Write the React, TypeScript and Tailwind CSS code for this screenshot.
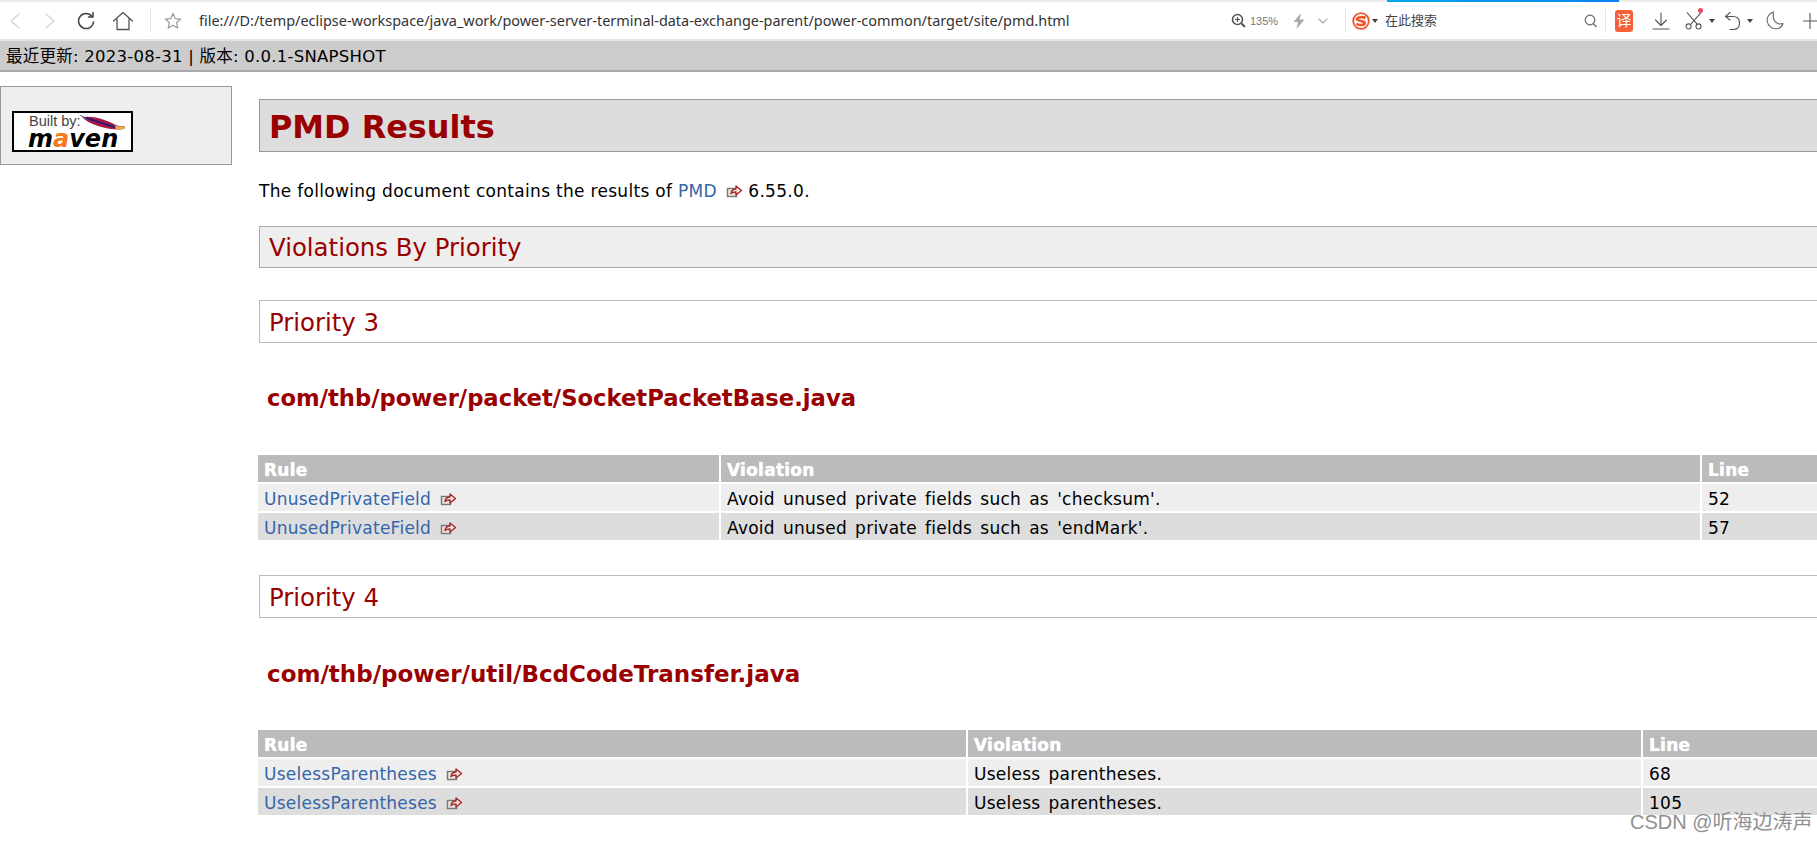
import React from "react";

const ExtIcon = () => (
  <svg width="17" height="14" viewBox="0 0 17 14" className="inline-block align-[-1px] ml-[3px]">
    <rect x="1.5" y="4.5" width="9" height="8" fill="#e8e4e0" stroke="#777" strokeWidth="1.4" />
    <path d="M5 9.5 C5.5 6.5 7.5 5 10 5 L10 2 L15.5 6.5 L10 11 L10 8 C8 8 6.5 8.3 5 9.5 Z" fill="#f4e4e0" stroke="#a52a2a" strokeWidth="1.4" strokeLinejoin="round" />
  </svg>
);

const stroke = { fill: "none", strokeLinecap: "round" as const, strokeLinejoin: "round" as const };

const Back = () => <svg width="12" height="18" viewBox="0 0 12 18"><path d="M10 2 L2 9 L10 16" stroke="#d4d4d4" strokeWidth="1.4" {...stroke} /></svg>;
const Fwd = () => <svg width="12" height="18" viewBox="0 0 12 18"><path d="M2 2 L10 9 L2 16" stroke="#d4d4d4" strokeWidth="1.4" {...stroke} /></svg>;
const Reload = () => <svg width="20" height="20" viewBox="0 0 20 20"><path d="M16 5.5 A7.5 7.5 0 1 0 17.5 11" stroke="#444" strokeWidth="1.5" {...stroke} /><path d="M12.5 6 L17 6 L17 1.5" stroke="#444" strokeWidth="1.5" {...stroke} /></svg>;
const Home = () => <svg width="22" height="20" viewBox="0 0 22 20"><path d="M1.5 10 L11 1.5 L20.5 10 M5 8 V18.5 H17 V8" stroke="#555" strokeWidth="1.3" {...stroke} /></svg>;
const Star = () => <svg width="18" height="18" viewBox="0 0 18 18"><path d="M9 1.5 L11.2 6.6 L16.7 7.1 L12.5 10.7 L13.8 16.1 L9 13.2 L4.2 16.1 L5.5 10.7 L1.3 7.1 L6.8 6.6 Z" stroke="#9a9a9a" strokeWidth="1.2" {...stroke} /></svg>;
const Zoom = () => <svg width="15" height="15" viewBox="0 0 15 15"><circle cx="6.5" cy="6.5" r="5" stroke="#555" strokeWidth="1.6" fill="none" /><path d="M10.5 10.5 L14 14" stroke="#555" strokeWidth="2" /><path d="M4 6.5 H9 M6.5 4 V9" stroke="#555" strokeWidth="1.2" /></svg>;
const Bolt = () => <svg width="12" height="16" viewBox="0 0 12 16"><path d="M8 0 L0.5 9 H5 L3.5 16 L11.5 6.5 H6.5 Z" fill="#a8a8a8" /></svg>;
const Chev = () => <svg width="10" height="6" viewBox="0 0 10 6"><path d="M1 1 L5 5 L9 1" stroke="#aaa" strokeWidth="1.1" {...stroke} /></svg>;
const Caret = () => <svg width="6" height="4" viewBox="0 0 6 4"><path d="M0 0 H6 L3 4 Z" fill="#444" /></svg>;
const Sogou = () => (
  <svg width="18" height="18" viewBox="0 0 18 18">
    <circle cx="9" cy="9" r="7.8" fill="#fff" stroke="#f0562c" strokeWidth="1.8" />
    <path d="M13.5 6.2 C12 4.8 5.5 4.6 5 7 C4.6 9.6 13 8.2 12.8 11 C12.5 13.5 6.5 13.4 4.3 11.8" fill="none" stroke="#f0562c" strokeWidth="2.6" />
  </svg>
);
const Search = () => <svg width="13" height="14" viewBox="0 0 13 14"><circle cx="6" cy="6" r="4.8" stroke="#666" strokeWidth="1.2" fill="none" /><path d="M9.5 9.8 L12.5 13" stroke="#666" strokeWidth="1.2" /></svg>;
const Download = () => <svg width="18" height="18" viewBox="0 0 18 18"><path d="M9 1 V13 M3.5 8 L9 13.5 L14.5 8 M1 17 H17" stroke="#555" strokeWidth="1.1" {...stroke} /></svg>;
const Scissors = () => <svg width="18" height="20" viewBox="0 0 20 20"><path d="M2.5 1 L14 14 M17.5 1 L6 14" stroke="#555" strokeWidth="1.2" {...stroke} /><circle cx="4" cy="16" r="2.8" stroke="#555" strokeWidth="1.2" fill="none" /><circle cx="15" cy="16" r="2.8" stroke="#555" strokeWidth="1.2" fill="none" /></svg>;
const Undo = () => <svg width="17" height="20" viewBox="0 0 17 20"><path d="M6 1.5 L1.5 5.5 L6 9 M1.5 5.5 H9 C13 5.5 15.5 8 15.5 12 C15.5 16 13 18.5 9 18.5 H6" stroke="#555" strokeWidth="1.2" {...stroke} /></svg>;
const Moon = () => <svg width="18" height="19" viewBox="0 0 18 19"><path d="M7.5 1 C2.5 2.5 0.7 7 1.2 10.5 C2 15 6 18 10 17.8 C13.5 17.6 16 15.5 17 12.5 C13 13.8 9 12 7.8 8.5 C7 6 7 3.5 7.5 1 Z" stroke="#666" strokeWidth="1.1" {...stroke} /></svg>;
const Plus = () => <svg width="14" height="16" viewBox="0 0 14 16"><path d="M7 0 V16 M0 8 H14" stroke="#555" strokeWidth="1.1" /></svg>;

const MavenLogo = () => (
  <div className="relative w-[121px] h-[41px] border-2 border-black bg-white mt-[24px] ml-[11px]">
    <span className="absolute left-[15px] top-[1px] text-[14.5px] leading-[15px] text-[#444] [font-family:'Liberation_Sans',sans-serif]">Built by:</span>
    <svg className="absolute left-[62px] top-[2px]" width="55" height="16" viewBox="0 0 50 17">
      <path d="M2 1 L6 2 C14 1 28 5 37 10 C41 12 45 12 48 12 L47 15 C40 16 32 15 24 13 C16 11 9 8 4 4 Z" fill="#a8174a" />
      <path d="M6 3 C16 6 28 11 40 13.5" stroke="#2d1a6b" strokeWidth="2" fill="none" />
      <path d="M37 11 C41 12.5 45 12.5 48 12 L47 15 C44 15.5 41 15.5 38 15 Z" fill="#e0b048" />
      <path d="M0 0 L8 5" stroke="#5a6a80" strokeWidth="1" />
    </svg>
    <span className="absolute left-[14px] top-[15px] text-[24px] leading-[22px] font-bold italic text-black [font-family:'DejaVu_Sans',sans-serif]">
      m<span className="text-[#f07a1c]">a</span>ven
    </span>
  </div>
);

type Row = { rule: string; text: string; line: string };

const ViolationTable = ({ c1, c2, rows }: { c1: string; c2: string; rows: Row[] }) => {
  const th = "bg-[#bbbbbb] text-white font-bold text-left px-[6px] pt-[2px] pb-0 h-[27px] [text-shadow:0_0_1px_#fff]";
  const td = "px-[6px] pt-[2px] pb-0 h-[27px]";
  return (
    <table className="border-separate border-spacing-[2px] -ml-[3px] w-[1640px] table-fixed text-[17px] tracking-[0.25px]">
      <colgroup>
        <col className={c1} />
        <col className={c2} />
        <col />
      </colgroup>
      <thead>
        <tr>
          <th className={th}>Rule</th>
          <th className={th}>Violation</th>
          <th className={th}>Line</th>
        </tr>
      </thead>
      <tbody>
        {rows.map((r, i) => (
          <tr key={i} className={i % 2 === 0 ? "bg-[#eeeeee]" : "bg-[#dddddd]"}>
            <td className={td}>
              <span className="text-[#3366aa]">{r.rule}</span> <ExtIcon />
            </td>
            <td className={`${td} [word-spacing:2.5px]`}>{r.text}</td>
            <td className={td}>{r.line}</td>
          </tr>
        ))}
      </tbody>
    </table>
  );
};

export default function App() {
  return (
    <div className="relative w-[1817px] h-[841px] overflow-hidden bg-white text-black text-[16px] leading-[20px] [font-family:'DejaVu_Sans','Noto_Sans_CJK_SC',sans-serif]">
      {/* tab strip */}
      <div className="relative h-[2px] bg-[#ececec]">
        <div className="absolute left-[1387px] top-0 w-[232px] h-[2px] bg-gradient-to-r from-[#0aa5f0] to-[#0a84f0]" />
      </div>
      {/* toolbar */}
      <div className="h-[37px] flex items-center text-[#222] border-b-[2px] border-[#e4e4e4] box-content [font-family:'Liberation_Sans','Noto_Sans_CJK_SC',sans-serif]">
        <div className="ml-[9px] flex"><Back /></div>
        <div className="ml-[23px] flex"><Fwd /></div>
        <div className="ml-[20px] flex"><Reload /></div>
        <div className="ml-[16px] flex"><Home /></div>
        <div className="ml-[16px] w-px h-[24px] bg-[#e6e6e6]" />
        <div className="ml-[13px] flex"><Star /></div>
        <div className="ml-[17px] text-[14.45px] text-[#333] w-[1032px] whitespace-nowrap [font-family:'Noto_Sans','Liberation_Sans',sans-serif]">
          file:///D:/temp/eclipse-workspace/java_work/power-server-terminal-data-exchange-parent/power-common/target/site/pmd.html
        </div>
        <div className="flex"><Zoom /></div>
        <div className="ml-[4px] w-[28px] text-[11px] text-[#777] whitespace-nowrap">135%</div>
        <div className="ml-[15px] flex"><Bolt /></div>
        <div className="ml-[13px] flex"><Chev /></div>
        <div className="ml-[17px] w-px h-[24px] bg-[#e6e6e6]" />
        <div className="ml-[6px] flex"><Sogou /></div>
        <div className="ml-[2px] flex"><Caret /></div>
        <div className="ml-[7px] w-[199px] text-[13px] text-[#444] whitespace-nowrap">在此搜索</div>
        <div className="flex"><Search /></div>
        <div className="ml-[8px] w-px h-[24px] bg-[#e6e6e6]" />
        <div className="ml-[9px] w-[18px] h-[22px] rounded-[3px] bg-[#f5603a] text-white text-[15px] flex items-center justify-center leading-none">译</div>
        <div className="ml-[19px] flex"><Download /></div>
        <div className="relative ml-[15px] flex">
          <Scissors />
          <span className="absolute left-[13px] -top-[3px] w-[5px] h-[5px] rounded-full bg-[#f04a5a]" />
        </div>
        <div className="ml-[6px] flex"><Caret /></div>
        <div className="ml-[9px] flex"><Undo /></div>
        <div className="ml-[6px] flex"><Caret /></div>
        <div className="ml-[13px] flex"><Moon /></div>
        <div className="ml-[19px] flex"><Plus /></div>
      </div>
      {/* banner */}
      <div className="h-[31px] bg-[#cccccc] border-b-2 border-[#aaaaaa] box-border flex items-center pl-[6px] pt-[2px] text-[16.5px] tracking-[0.25px] whitespace-nowrap">
        最近更新: 2023-08-31 | 版本: 0.0.1-SNAPSHOT
      </div>
      {/* body */}
      <div className="flex items-start">
        <aside className="w-[232px] h-[79px] mt-[14px] shrink-0 bg-[#eeeeee] border border-[#999999]">
          <MavenLogo />
        </aside>
        <main className="ml-[27px] w-[1640px] shrink-0 pt-[27px]">
          <h2 className="h-[53px] bg-[#dddddd] border border-[#999999] px-[9px] text-[#990000] font-bold text-[31.9px] leading-[55px]">PMD Results</h2>
          <p className="mt-[29px] h-[20px] whitespace-nowrap text-[17px] tracking-[0.3px]">
            The following document contains the results of <span className="text-[#3366aa]">PMD</span> <ExtIcon /> 6.55.0.
          </p>
          <h3 className="mt-[25px] h-[42px] bg-[#eeeeee] border border-[#aaaaaa] px-[9px] text-[#990000] text-[24.4px] leading-[42px]">Violations By Priority</h3>
          <h3 className="mt-[32px] h-[43px] bg-white border border-[#bbbbbb] px-[9px] text-[#990000] text-[24.4px] leading-[43px]">Priority 3</h3>
          <h4 className="mt-[42px] h-[24px] pl-[8px] text-[#990000] font-bold text-[22.7px] leading-[26px] whitespace-nowrap">com/thb/power/packet/SocketPacketBase.java</h4>
          <div className="mt-[44px]">
            <ViolationTable
              c1="w-[461px]"
              c2="w-[979px]"
              rows={[
                { rule: "UnusedPrivateField", text: "Avoid unused private fields such as 'checksum'.", line: "52" },
                { rule: "UnusedPrivateField", text: "Avoid unused private fields such as 'endMark'.", line: "57" },
              ]}
            />
          </div>
          <h3 className="mt-[33px] h-[43px] bg-white border border-[#bbbbbb] px-[9px] text-[#990000] text-[24.4px] leading-[43px]">Priority 4</h3>
          <h4 className="mt-[44px] h-[24px] pl-[8px] text-[#990000] font-bold text-[23px] leading-[25px] whitespace-nowrap">com/thb/power/util/BcdCodeTransfer.java</h4>
          <div className="mt-[42px]">
            <ViolationTable
              c1="w-[708px]"
              c2="w-[673px]"
              rows={[
                { rule: "UselessParentheses", text: "Useless parentheses.", line: "68" },
                { rule: "UselessParentheses", text: "Useless parentheses.", line: "105" },
              ]}
            />
          </div>
        </main>
      </div>
      {/* watermark */}
      <div className="absolute left-[1630px] top-[810px] text-[20px] leading-[24px] text-[#909090] whitespace-nowrap [font-family:'Liberation_Sans','Noto_Sans_CJK_SC',sans-serif] [text-shadow:0_0_1px_#fff]">
        CSDN @听海边涛声
      </div>
    </div>
  );
}
